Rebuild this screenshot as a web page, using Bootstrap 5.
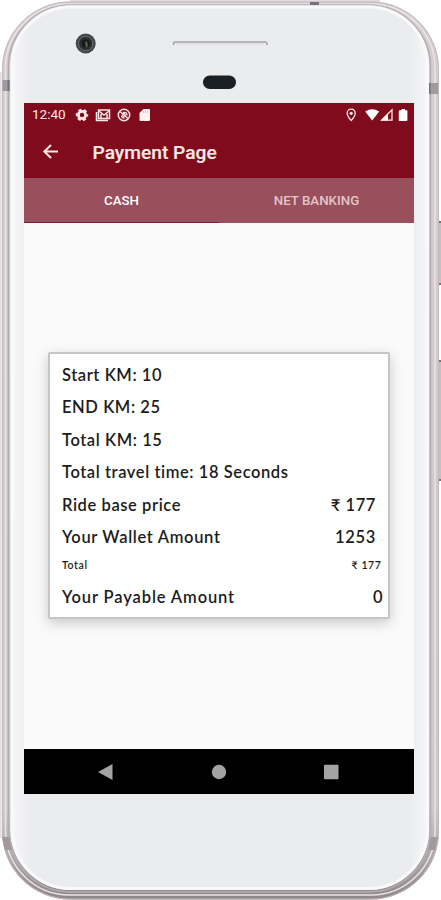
<!DOCTYPE html>
<html lang="en">
<head>
<meta charset="utf-8">
<meta name="viewport" content="width=device-width, initial-scale=1">
<title>Payment Page</title>
<link href="https://cdn.jsdelivr.net/npm/bootstrap@5.3.0/dist/css/bootstrap.min.css" rel="stylesheet">
<style>
body{background:#fff;font-family:Roboto,sans-serif;overflow:hidden}
.phone{width:441px;height:900px}
.shell{left:0;top:0;z-index:0}
.screen{width:390px;height:691px;margin:0 0 106px 24px;background:#fafafa;z-index:1}
.front{height:103px;flex:none}
.maroon{background:#7f0b1c;color:#fbe9e6}
.status{height:23px;font-size:13.5px;padding:0 0 0 8px;line-height:23px}
.toolbar{height:52px}
.toolbar-back{margin-left:18px}
.toolbar h1{font-size:19.2px;font-weight:500;margin-left:33.500px;line-height:51px;-webkit-text-stroke:.15px #fbe9e6}
.tabs{height:45px;background:#994f5c;flex-wrap:nowrap}
.tabs .nav-link{border-radius:0;color:#e3c5c9;font-size:13.3px;font-weight:500;line-height:46px;height:45px}
.tabs .nav-link.active{background:none;color:#fff;border-bottom:1px solid #7f1c30}
.fare{width:342px;height:267px;margin:129px 0 0 24px;border:2px solid #c6c6c6;border-radius:2px;box-shadow:0 4px 13px rgba(0,0,0,.2);font:600 16.5px Lato,"Noto Sans",sans-serif;letter-spacing:.58px;color:#1c1c1c;padding:5px 12px 0 12px}
.fare .line{height:32.45px;line-height:32px}
.fare .tiny{height:27px;line-height:22px;font-size:10.5px;letter-spacing:.6px;margin-right:-5.500px}
.fare .due{margin-right:-7.500px;letter-spacing:.88px}
.fare .wallet{letter-spacing:.66px}
.n{white-space:nowrap}
.softkeys{height:45px;background:#000}
</style>
<script src="https://cdn.jsdelivr.net/npm/bootstrap@5.3.0/dist/js/bootstrap.bundle.min.js"></script>
</head>
<body>
<div class="phone position-relative d-flex flex-column">
  <svg class="shell position-absolute" width="441" height="900" viewBox="0 0 441 900" aria-hidden="true">
    <defs>
      <linearGradient id="face" x1="0" x2="1"><stop offset="0" stop-color="#f8f8fa"/><stop offset=".045" stop-color="#ebecee"/><stop offset=".955" stop-color="#ebecee"/><stop offset="1" stop-color="#f8f8fa"/></linearGradient>
      <linearGradient id="rim" x1="0" y1="0" x2="0" y2="1"><stop offset="0" stop-color="#d6cdce"/><stop offset=".9" stop-color="#cfc7c9"/><stop offset="1" stop-color="#8f8689"/></linearGradient>
    </defs>
    <path d="M70 1H380M.5 72V838" stroke="#e2dcdd" stroke-width="2"/>
    <path d="M439.5 222V284M439.5 361V480" stroke="#c5c1c3" stroke-width="3"/>
    <path d="M438 222h3M438 284h3M438 361h3M438 480h3" stroke="#777276" stroke-width="2"/>
    <rect x="2" y="1.5" width="437" height="898" rx="68" fill="url(#rim)"/>
    <rect x="2.5" y="2" width="436" height="897" rx="67.500" fill="none" stroke="#c3babd"/>
    <rect x="5.500" y="4" width="429.500" height="891" rx="64" fill="none" stroke="#e8e3e5" stroke-width="1.500"/>
    <rect x="8.500" y="5" width="422" height="887" rx="62" fill="none" stroke="#b5adb1" stroke-width="1.500"/>
    <path d="M310 2h9v3h-9z" fill="#77717a"/>
    <path d="M2.500 80h7v11h-7zM429 83h9v11h-9z" fill="#a09a9f"/>
    <path d="M2 837h7l3 13H5zM431 837h7l-3 13h-7z" fill="#a09a9f"/>
    <path d="M8.500 80v11M429.500 83v11" stroke="#77717a" stroke-width="2"/>
    <rect x="10.500" y="5.500" width="418.500" height="884.500" rx="60" fill="url(#face)"/>
    <rect x="12" y="7" width="415.500" height="881.500" rx="59" fill="none" stroke="#f9f9fb" stroke-width="3"/>
    <circle cx="85.700" cy="43.500" r="10" fill="#43484a"/>
    <circle cx="85.700" cy="43.500" r="7.200" fill="#292e2f" stroke="#6a6e6e"/>
    <circle cx="85.700" cy="43.500" r="4" fill="#15191a"/>
    <path d="M85 42l2-1 1 5-2 2z" fill="#5a5d40"/>
    <path d="M173.500 45v-1q0-2 2-2H265q2 0 2 2v1" fill="none" stroke="#a2a1a6" stroke-width="1.500"/>
    <path d="M176 44h88" stroke="#d5d5d9"/>
    <rect x="203" y="75.500" width="33" height="13.500" rx="6.750" fill="#1b2024"/>
  </svg>
  <div class="front"></div>
  <main class="screen position-relative d-flex flex-column">
    <header class="maroon">
      <div class="status d-flex align-items-center justify-content-between">
        <div class="d-flex align-items-center"><span class="n">12:40</span>
          <svg width="82" height="14" viewBox="1 0 82 14" class="ms-2">
            <g fill="none" stroke="#fbe9e6">
              <circle cx="9" cy="7" r="3.600" stroke-width="2.800"/>
              <circle cx="9" cy="7" r="5.300" stroke-width="1.900" stroke-dasharray="3.200 2.350" stroke-dashoffset="1.600"/>
              <path d="M25.500 2h11v8.500h-11zM23.500 4v8.500H35" stroke-width="1.500"/>
              <path d="M26 3l5 4 5-4M28 10V6M34 10V6" stroke-width="1.500"/>
              <circle cx="51" cy="7" r="5.700" stroke-width="1.500"/>
              <path d="M47 3.500l8 7M48.500 7.500q0 2.500 3 2.500M50 4.500q4-1 4 3" stroke-width="1.300"/>
              <circle cx="51" cy="7" r="1.500" stroke-width="1"/>
            </g>
            <path d="M70.500 1H76q1 0 1 1v10q0 1-1 1h-8.500q-1 0-1-1V5z" fill="#fff3ef"/><path d="M70.500 3v2M72.500 3v2M74.500 3v2" stroke="#dbb0b0" stroke-width=".8"/>
          </svg>
        </div>
        <svg width="70" height="14" viewBox="0 0 70 14">
          <path d="M7.200 1.200c-2.400 0-4 1.700-4 4 0 2.800 4 7.300 4 7.300s4-4.500 4-7.300c0-2.300-1.600-4-4-4z" fill="none" stroke="#fbe9e6" stroke-width="1.300"/><circle cx="7.200" cy="5.300" r="1.600" fill="#fbe9e6"/>
          <path d="M21.200 3.500q7-4.500 14 0L28.200 12.500z" fill="#fff"/>
          <path d="M37.500 12.200L48 1.800V12.200z" fill="none" stroke="#fbe9e6" stroke-width="1.300"/><path d="M37 12.500l7-7v7z" fill="#fff"/>
          <path d="M55.500 2.300H57.500V1h3.500v1.300h1.700q.7 0 .7.700v9.300q0 .7-.7.700h-7.200q-.7 0-.7-.7V3q0-.7.700-.7z" fill="#fff"/>
        </svg>
      </div>
      <div class="toolbar d-flex align-items-center">
        <svg width="17" height="16" viewBox="0 0 17 16" class="toolbar-back"><path d="M16 7.500H2.500M9 1L2.300 7.500 9 14" fill="none" stroke="#fbe9e6" stroke-width="2"/></svg>
        <h1 class="mb-0 n">Payment Page</h1>
      </div>
    </header>
    <nav class="nav nav-pills nav-fill tabs">
      <a class="nav-link nav-item active p-0 w-50" href="#">CASH</a>
      <a class="nav-link nav-item p-0 w-50" href="#">NET BANKING</a>
    </nav>
    <section class="fare bg-white">
      <div class="line"><span class="n">Start KM: 10</span></div>
      <div class="line"><span class="n">END KM: 25</span></div>
      <div class="line"><span class="n">Total KM: 15</span></div>
      <div class="line"><span class="n">Total travel time: 18 Seconds</span></div>
      <div class="line d-flex justify-content-between"><span class="n">Ride base price</span><span class="n">₹ 177</span></div>
      <div class="line wallet d-flex justify-content-between"><span class="n">Your Wallet Amount</span><span class="n">1253</span></div>
      <div class="tiny d-flex justify-content-between"><span class="n">Total</span><span class="n">₹ 177</span></div>
      <div class="line due d-flex justify-content-between"><span class="n">Your Payable Amount</span><span class="n">0</span></div>
    </section>
    <footer class="softkeys mt-auto d-flex justify-content-center align-items-center">
      <svg width="390" height="44" viewBox="0 0 390 44"><g fill="#a3a3a3"><path d="M74 22l14.500-8v16z"/><circle cx="195" cy="22" r="7.200"/><rect x="300" y="14.800" width="14.500" height="14.500" rx="1"/></g></svg>
    </footer>
  </main>
</div>
</body>
</html>
